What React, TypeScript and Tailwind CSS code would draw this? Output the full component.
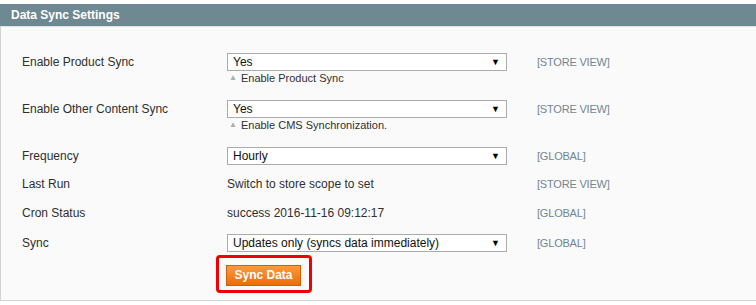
import React from 'react';

type Row = {
  label: string;
  scope: string;
  select?: string;
  text?: string;
  hint?: string;
  mt: string;
};

const rows: Row[] = [
  { label: 'Enable Product Sync', select: 'Yes', hint: 'Enable Product Sync', scope: '[STORE VIEW]', mt: 'mt-0' },
  { label: 'Enable Other Content Sync', select: 'Yes', hint: 'Enable CMS Synchronization.', scope: '[STORE VIEW]', mt: 'mt-[15px]' },
  { label: 'Frequency', select: 'Hourly', scope: '[GLOBAL]', mt: 'mt-[15px]' },
  { label: 'Last Run', text: 'Switch to store scope to set', scope: '[STORE VIEW]', mt: 'mt-[10px]' },
  { label: 'Cron Status', text: 'success 2016-11-16 09:12:17', scope: '[GLOBAL]', mt: 'mt-[11px]' },
  { label: 'Sync', select: 'Updates only (syncs data immediately)', scope: '[GLOBAL]', mt: 'mt-[12px]' },
];

function FakeSelect({ value }: { value: string }) {
  return (
    <div className="flex h-[18px] w-[280px] items-center justify-between border border-[#ababab] bg-white pl-[5px] pr-[6px] text-[12px] leading-none text-[#111]">
      <span>{value}</span>
      <span className="text-[9px] text-black">▼</span>
    </div>
  );
}

export default function App() {
  return (
    <div className="min-h-[305px] bg-white pt-[4px] font-['Liberation_Sans',Arial,sans-serif]">
      <div className="flex h-[22px] items-center bg-[#6f8992] pl-[11px] text-[12px] font-bold text-white">
        Data Sync Settings
      </div>
      <div className="border-t border-[#e3e3e3] border-b border-l border-b-[#d3d3d3] border-l-[#d3d3d3] bg-[#fafafa] pb-[14px] pt-[26px]">
        {rows.map((r) => (
          <div key={r.label} className={`${r.mt} grid grid-cols-[205px_280px_1fr] pl-[21px] text-[12px] text-[#2f2f2f]`}>
            <div className="flex h-[18px] items-center">{r.label}</div>
            <div>
              {r.select ? (
                <FakeSelect value={r.select} />
              ) : (
                <div className="flex h-[18px] items-center">{r.text}</div>
              )}
              {r.hint ? (
                <div className="flex h-[14px] items-center pl-[2px] text-[11px] text-[#303030]">
                  <span className="mr-[4px] text-[8px] text-[#a4aeb3]">▲</span>
                  {r.hint}
                </div>
              ) : null}
            </div>
            <div className="flex h-[18px] items-center pl-[30px] text-[11px] tracking-[-0.2px] text-[#728691]">{r.scope}</div>
          </div>
        ))}
        <div className="mt-[10px] pl-[225px]">
          <div className="relative inline-block">
            <button className="h-[21px] w-[75px] border border-[#d85c00] bg-gradient-to-b from-[#ff9a3c] to-[#eb6c00] text-[12px] font-bold text-white">
              Sync Data
            </button>
            <div className="pointer-events-none absolute -bottom-[7px] -left-[10px] -right-[11px] -top-[7px] rounded-[4px] border-[3px] border-[#f20000]" />
          </div>
        </div>
      </div>
    </div>
  );
}
